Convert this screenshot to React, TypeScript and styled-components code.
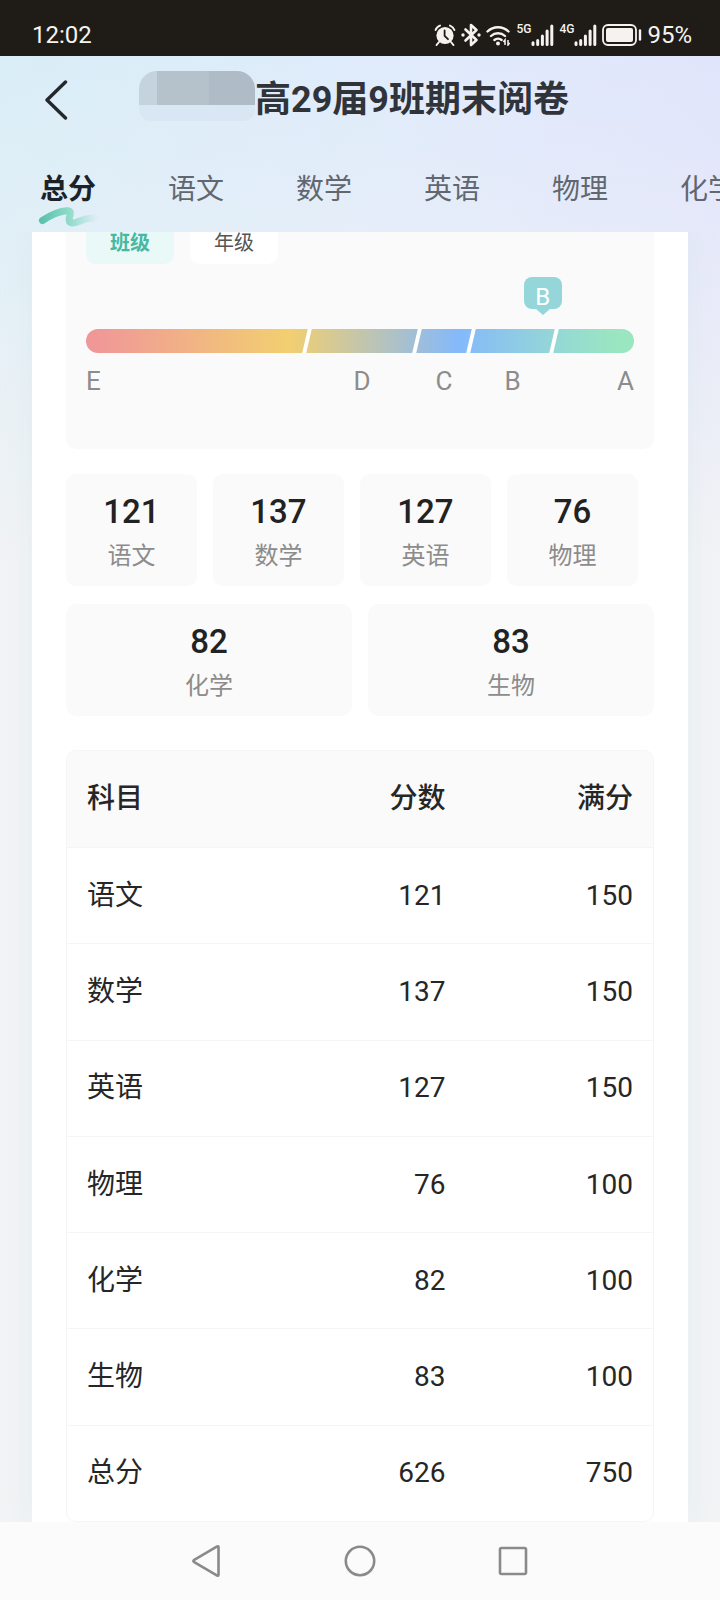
import React from "react";
import styled, { createGlobalStyle } from "styled-components";

const latinFirst = `Roboto, "Noto Sans CJK SC", "Noto Sans", sans-serif`;

const GlobalStyle = createGlobalStyle`
  *, *::before, *::after { box-sizing: border-box; }
  body {
    margin: 0;
    background: #f1f3f5;
    color: #262626;
    font-family: "Noto Sans CJK SC", "Noto Sans", sans-serif;
  }
  button { border: 0; padding: 0; margin: 0; background: none; font: inherit; color: inherit; cursor: pointer; }
`;

const Page = styled.div`
  display: flex;
  flex-direction: column;
  min-height: 100vh;
  background:
    linear-gradient(180deg, rgba(241, 243, 245, 0) 56px, rgba(241, 243, 245, 0.3) 230px, #f1f3f5 560px),
    linear-gradient(100deg, #d9eef7 0%, #e0ebfb 42%, #e1e3fc 80%);
`;

const StatusBar = styled.div`
  display: flex;
  align-items: center;
  justify-content: space-between;
  height: 56px;
  padding: 14px 28px 0 32px;
  background: #1f1c18;
  color: #f5f3f0;
  font-family: ${latinFirst};
  font-size: 24px;
  line-height: 32px;
`;

const StatusIcons = styled.div`
  display: flex;
  align-items: center;
  gap: 5px;
`;

const Signal = styled.span`
  display: flex;
  align-items: flex-start;
`;

const NetLabel = styled.span`
  font-size: 12px;
  line-height: 10px;
  font-weight: 500;
`;

const Header = styled.header`
  display: grid;
  grid-template-columns: 72px 1fr 84px;
  align-items: center;
  height: 88px;
`;

const BackButton = styled.button`
  display: flex;
  justify-content: flex-end;
  height: 48px;
  padding: 4px;
`;

const TitleRow = styled.div`
  display: flex;
  align-items: center;
  justify-content: center;
`;

const Mask = styled.span`
  flex: none;
  width: 116px;
  height: 50px;
  margin-bottom: 8px;
  border-radius: 18px 18px 12px 12px;
  background:
    linear-gradient(#d8e7f3, #d8e7f3) 0 34px / 100% 16px no-repeat,
    linear-gradient(90deg, #c5d3df 18px, #b5c2cc 18px 70px, #afbcc7 70px);
`;

const Title = styled.h1`
  margin: 0;
  color: #30343a;
  font-family: ${latinFirst};
  font-size: 36px;
  line-height: 48px;
  font-weight: 700;
  white-space: nowrap;
`;

const Tabs = styled.nav`
  display: flex;
  gap: 72px;
  height: 88px;
  padding-left: 40px;
  overflow: hidden;
`;

const Tab = styled.button<{ $active?: boolean }>`
  position: relative;
  flex: none;
  padding-bottom: 2px;
  color: ${(p) => (p.$active ? "#1d2228" : "#62676f")};
  font-size: 28px;
  line-height: 40px;
  font-weight: ${(p) => (p.$active ? 700 : 400)};
`;

const Swoosh = styled.svg`
  position: absolute;
  left: -2px;
  bottom: 4px;
`;

const Sheet = styled.main`
  flex: 1;
  display: grid;
  grid-template-rows: auto auto 1fr;
  margin: 0 32px;
  padding: 0 34px;
  background: #fff;
  box-shadow: 0 0 24px rgba(200, 228, 228, 0.28);
  clip-path: inset(0 -32px);
`;

const LevelCard = styled.section`
  padding: 0 20px 48px;
  border-radius: 0 0 10px 10px;
  background: #fafafa;
`;

const ScopeSwitch = styled.div`
  display: flex;
  gap: 16px;
`;

const ScopeButton = styled.button<{ $active?: boolean }>`
  width: 88px;
  padding: 0 0 12px;
  border-radius: 0 0 10px 10px;
  background: ${(p) => (p.$active ? "#e9f9f7" : "#fff")};
  color: ${(p) => (p.$active ? "#48b8a2" : "#555")};
  font-size: 20px;
  line-height: 20px;
  font-weight: ${(p) => (p.$active ? 700 : 400)};
`;

const Scale = styled.div`
  position: relative;
  padding-top: 65px;
`;

const Badge = styled.div`
  position: absolute;
  top: 13px;
  left: 83%;
  width: 38px;
  height: 32px;
  margin-left: -17px;
  border-radius: 8px;
  background: #94d6da;
  color: #fff;
  font-family: ${latinFirst};
  font-size: 24px;
  line-height: 40px;
  text-align: center;

  &::after {
    content: "";
    position: absolute;
    top: 32px;
    left: 12px;
    border: 7px solid transparent;
    border-top: 6px solid #94d6da;
    border-bottom: 0;
  }
`;

const Bar = styled.div`
  display: flex;
  height: 24px;
  border-radius: 12px;
  overflow: hidden;
  background: linear-gradient(90deg, #f09898 2%, #f2cf70 37%, #84b9fb 68%, #95d8d5 86%, #9ae6c0 97%);
`;

const Segment = styled.span<{ $share: number }>`
  flex: ${(p) => p.$share} 1 0;
`;

const Divider = styled.span`
  width: 4px;
  background: #fff;
  transform: skewX(-13deg);
`;

const Letters = styled.div`
  display: flex;
  gap: 4px;
  margin-top: 8px;
`;

const Letter = styled.span<{ $share: number; $align: string }>`
  flex: ${(p) => p.$share} 1 0;
  color: #8c8c8c;
  font-family: ${latinFirst};
  font-size: 26px;
  line-height: 40px;
  text-align: ${(p) => p.$align};
`;

const Scores = styled.section`
  display: grid;
  gap: 18px;
  padding: 25px 0 34px;
`;

const ScoreRow = styled.div<{ $columns: number; $trail?: boolean }>`
  display: grid;
  grid-template-columns: repeat(${(p) => p.$columns}, 1fr);
  gap: 16px;
  padding-right: ${(p) => (p.$trail ? 16 : 0)}px;
`;

const ScoreCard = styled.div`
  display: grid;
  gap: 6px;
  padding: 18px 0 16px;
  border-radius: 10px;
  background: #fafafa;
  text-align: center;
`;

const ScoreValue = styled.strong`
  color: #222;
  font-family: ${latinFirst};
  font-size: 33px;
  line-height: 40px;
  font-weight: 500;
`;

const ScoreName = styled.span`
  color: #8c8c8c;
  font-size: 24px;
  line-height: 32px;
`;

const Table = styled.table`
  width: 100%;
  height: 100%;
  table-layout: fixed;
  border: 1px solid #f5f5f5;
  border-radius: 10px;
  border-collapse: separate;
  border-spacing: 0;
  overflow: hidden;
  font-family: ${latinFirst};
  font-size: 28px;
  line-height: 40px;
`;

const HeadCell = styled.th<{ $wide?: boolean }>`
  width: ${(p) => (p.$wide ? "36%" : "32%")};
  padding: 28px 20px;
  border-bottom: 1px solid #f5f5f5;
  background: #fafafa;
  font-weight: 500;
  text-align: ${(p) => (p.$wide ? "left" : "right")};
`;

const Cell = styled.td<{ $wide?: boolean }>`
  padding: 24px 20px;
  border-bottom: 1px solid #f5f5f5;
  text-align: ${(p) => (p.$wide ? "left" : "right")};

  tr:last-child > & { border-bottom: 0; }
`;

const SystemNav = styled.nav`
  position: sticky;
  bottom: 0;
  display: flex;
  justify-content: center;
  height: 78px;
  background: #fbfbfb;
`;

const SystemButton = styled.button`
  display: flex;
  align-items: center;
  justify-content: center;
  width: 153px;
`;

const tabs = ["总分", "语文", "数学", "英语", "物理", "化学"];

const levels = [
  { name: "E", share: 219, align: "left" },
  { name: "D", share: 106, align: "center" },
  { name: "C", share: 50, align: "center" },
  { name: "B", share: 79, align: "center" },
  { name: "A", share: 78, align: "right" },
];

const subjects = [
  { name: "语文", score: 121, full: 150 },
  { name: "数学", score: 137, full: 150 },
  { name: "英语", score: 127, full: 150 },
  { name: "物理", score: 76, full: 100 },
  { name: "化学", score: 82, full: 100 },
  { name: "生物", score: 83, full: 100 },
];

const rows = [...subjects, { name: "总分", score: 626, full: 750 }];

const AlarmIcon = () => (
  <svg width="22" height="22" viewBox="0 0 22 22" aria-hidden="true">
    <circle cx="11" cy="11.5" r="8.6" fill="#f5f3f0" />
    <path d="M1.6 6A7 7 0 0 1 6 1.6M16 1.6A7 7 0 0 1 20.4 6M5 18l-2.4 3M17 18l2.4 3" stroke="#f5f3f0" strokeWidth="2" strokeLinecap="round" fill="none" />
    <path d="M10.6 6.4v5.4l3.4 3.4" stroke="#1f1c18" strokeWidth="1.8" strokeLinecap="round" fill="none" />
  </svg>
);

const BluetoothIcon = () => (
  <svg width="20" height="24" viewBox="0 0 20 24" aria-hidden="true">
    <path d="M4.5 6.5l11 10.5-5.500 5V2l5.500 5-11 10.500" stroke="#f5f3f0" strokeWidth="2.600" strokeLinejoin="round" strokeLinecap="round" fill="none" />
    <circle cx="2" cy="12" r="1.7" fill="#f5f3f0" />
    <circle cx="18" cy="12" r="1.7" fill="#f5f3f0" />
  </svg>
);

const WifiIcon = () => (
  <svg width="25" height="22" viewBox="0 0 25 22" aria-hidden="true">
    <path d="M1.5 7.5a15 15 0 0 1 21 0M5 12a10.2 10.2 0 0 1 14 0M8.4 16a5.4 5.4 0 0 1 7.2 0" stroke="#f5f3f0" strokeWidth="2.4" strokeLinecap="round" fill="none" />
    <circle cx="12" cy="19.4" r="2" fill="#f5f3f0" />
    <path d="M19 21v-5l-1.6 2M22 16v5l1.6-2" stroke="#f5f3f0" strokeWidth="1.5" fill="none" />
  </svg>
);

const BarsIcon = () => (
  <svg width="23" height="22" viewBox="0 0 23 22" aria-hidden="true">
    <path d="M2 20.4v-1.6M6.7 20.4v-4M11.4 20.4V12M16.1 20.4V7M20.8 20.4V2" stroke="#f5f3f0" strokeWidth="3" strokeLinecap="round" />
  </svg>
);

const BatteryIcon = () => (
  <svg width="40" height="22" viewBox="0 0 40 22" aria-hidden="true">
    <rect x="1" y="1" width="33" height="20" rx="5" stroke="#f5f3f0" strokeWidth="1.8" fill="none" />
    <rect x="4" y="4" width="27" height="14" rx="2" fill="#f5f3f0" />
    <path d="M38 6.500v9" stroke="#f5f3f0" strokeWidth="2.400" strokeLinecap="round" />
  </svg>
);

const BackIcon = () => (
  <svg width="24" height="40" viewBox="0 0 24 40" aria-hidden="true">
    <path d="M21.500 2L3 20l18.500 18" stroke="#24282d" strokeWidth="3.400" strokeLinecap="round" strokeLinejoin="round" fill="none" />
  </svg>
);

const ActiveMark = () => (
  <Swoosh width="60" height="22" viewBox="0 0 60 22" aria-hidden="true">
    <defs>
      <linearGradient id="mark" gradientUnits="userSpaceOnUse" x1="2" y1="0" x2="58" y2="0">
        <stop offset="0" stopColor="#57c1a9" />
        <stop offset="0.5" stopColor="#8ddac8" />
        <stop offset="1" stopColor="#8ddac8" stopOpacity="0.05" />
      </linearGradient>
    </defs>
    <path d="M4.500 14.500C12 9.500 21 5.500 28.500 4.800c6-.3 3.500 4 2.800 7.700-.7 5 3.200 5.500 9.200 3C46 13 50 12 57 12" stroke="url(#mark)" strokeWidth="7" strokeLinecap="round" strokeLinejoin="round" fill="none" />
  </Swoosh>
);

export default function App() {
  return (
    <>
      <GlobalStyle />
      <Page>
        <StatusBar>
          <span>12:02</span>
          <StatusIcons>
            <AlarmIcon />
            <BluetoothIcon />
            <WifiIcon />
            <Signal>
              <NetLabel>5G</NetLabel>
              <BarsIcon />
            </Signal>
            <Signal>
              <NetLabel>4G</NetLabel>
              <BarsIcon />
            </Signal>
            <BatteryIcon />
            <span>95%</span>
          </StatusIcons>
        </StatusBar>

        <Header>
          <BackButton aria-label="返回">
            <BackIcon />
          </BackButton>
          <TitleRow>
            <Mask />
            <Title>高29届9班期末阅卷</Title>
          </TitleRow>
        </Header>

        <Tabs>
          {tabs.map((name, i) => (
            <Tab key={name} $active={i === 0}>
              {name}
              {i === 0 && <ActiveMark />}
            </Tab>
          ))}
        </Tabs>

        <Sheet>
          <LevelCard>
            <ScopeSwitch>
              <ScopeButton $active>班级</ScopeButton>
              <ScopeButton>年级</ScopeButton>
            </ScopeSwitch>
            <Scale>
              <Badge>B</Badge>
              <Bar>
                {levels.map((level, i) => (
                  <React.Fragment key={level.name}>
                    {i > 0 && <Divider />}
                    <Segment $share={level.share} />
                  </React.Fragment>
                ))}
              </Bar>
              <Letters>
                {levels.map((level) => (
                  <Letter key={level.name} $share={level.share} $align={level.align}>
                    {level.name}
                  </Letter>
                ))}
              </Letters>
            </Scale>
          </LevelCard>

          <Scores>
            <ScoreRow $columns={4} $trail>
              {subjects.slice(0, 4).map((s) => (
                <ScoreCard key={s.name}>
                  <ScoreValue>{s.score}</ScoreValue>
                  <ScoreName>{s.name}</ScoreName>
                </ScoreCard>
              ))}
            </ScoreRow>
            <ScoreRow $columns={2}>
              {subjects.slice(4).map((s) => (
                <ScoreCard key={s.name}>
                  <ScoreValue>{s.score}</ScoreValue>
                  <ScoreName>{s.name}</ScoreName>
                </ScoreCard>
              ))}
            </ScoreRow>
          </Scores>

          <Table>
            <thead>
              <tr>
                <HeadCell $wide>科目</HeadCell>
                <HeadCell>分数</HeadCell>
                <HeadCell>满分</HeadCell>
              </tr>
            </thead>
            <tbody>
              {rows.map((r) => (
                <tr key={r.name}>
                  <Cell $wide>{r.name}</Cell>
                  <Cell>{r.score}</Cell>
                  <Cell>{r.full}</Cell>
                </tr>
              ))}
            </tbody>
          </Table>
        </Sheet>

        <SystemNav>
          <SystemButton aria-label="返回上一级">
            <svg width="32" height="36" viewBox="0 0 32 36" aria-hidden="true">
              <path d="M27.500 4v28a.8.8 0 0 1-1.300.6L2.800 18.800a1 1 0 0 1 0-1.600L26.200 3.400a.8.8 0 0 1 1.300.6z" stroke="#8a8a8a" strokeWidth="2.600" strokeLinejoin="round" fill="none" />
            </svg>
          </SystemButton>
          <SystemButton aria-label="主页">
            <svg width="32" height="32" viewBox="0 0 32 32" aria-hidden="true">
              <circle cx="16" cy="16" r="14.200" stroke="#8a8a8a" strokeWidth="2.600" fill="none" />
            </svg>
          </SystemButton>
          <SystemButton aria-label="最近任务">
            <svg width="32" height="32" viewBox="0 0 32 32" aria-hidden="true">
              <rect x="3" y="3" width="26" height="26" rx="1.500" stroke="#8a8a8a" strokeWidth="2.600" fill="none" />
            </svg>
          </SystemButton>
        </SystemNav>
      </Page>
    </>
  );
}
